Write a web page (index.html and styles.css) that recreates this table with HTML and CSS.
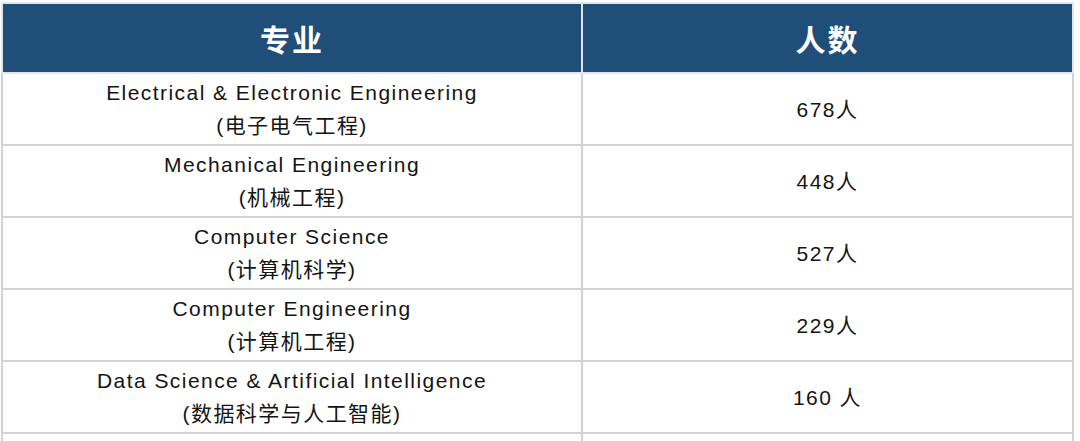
FILE: index.html
```html
<!DOCTYPE html>
<html lang="zh-CN">
<head>
<meta charset="utf-8">
<link rel="stylesheet" href="styles.css">
</head>
<body>
<table class="grid">
  <thead>
    <tr><th class="col-major">专业</th><th class="col-count">人数</th></tr>
  </thead>
  <tbody>
    <tr><td>Electrical &amp; Electronic Engineering<br>(电子电气工程)</td><td>678人</td></tr>
    <tr><td>Mechanical Engineering<br>(机械工程)</td><td>448人</td></tr>
    <tr><td>Computer Science<br>(计算机科学)</td><td>527人</td></tr>
    <tr><td>Computer Engineering<br>(计算机工程)</td><td>229人</td></tr>
    <tr><td>Data Science &amp; Artificial Intelligence<br>(数据科学与人工智能)</td><td>160 人</td></tr>
    <tr class="tail"><td></td><td></td></tr>
  </tbody>
</table>
</body>
</html>
```

FILE: styles.css
```css
html, body {
  margin: 0;
  padding: 0;
  background: #ffffff;
}
body {
  padding: 2px 0 0 1px;
  font-family: "Liberation Sans", "Noto Sans CJK SC", sans-serif;
  color: #141414;
}
.grid {
  border-collapse: collapse;
  width: 1073px;
  table-layout: fixed;
}
.grid th, .grid td {
  border: 2px solid #d2d2d2;
  text-align: center;
  vertical-align: middle;
  padding: 0;
}
.grid th {
  background: #1f4e79;
  color: #ffffff;
  font-family: "Noto Sans CJK SC", sans-serif;
  font-weight: 700;
  font-size: 30px;
  letter-spacing: 2px;
  height: 68px;
  border-color: #dfe6ee;
}
.col-major { width: 578px; }
.grid td {
  font-size: 21px;
  letter-spacing: 1.45px;
  line-height: 33px;
  height: 70px;
}
.grid tr.tail td {
  height: 20px;
}
```
